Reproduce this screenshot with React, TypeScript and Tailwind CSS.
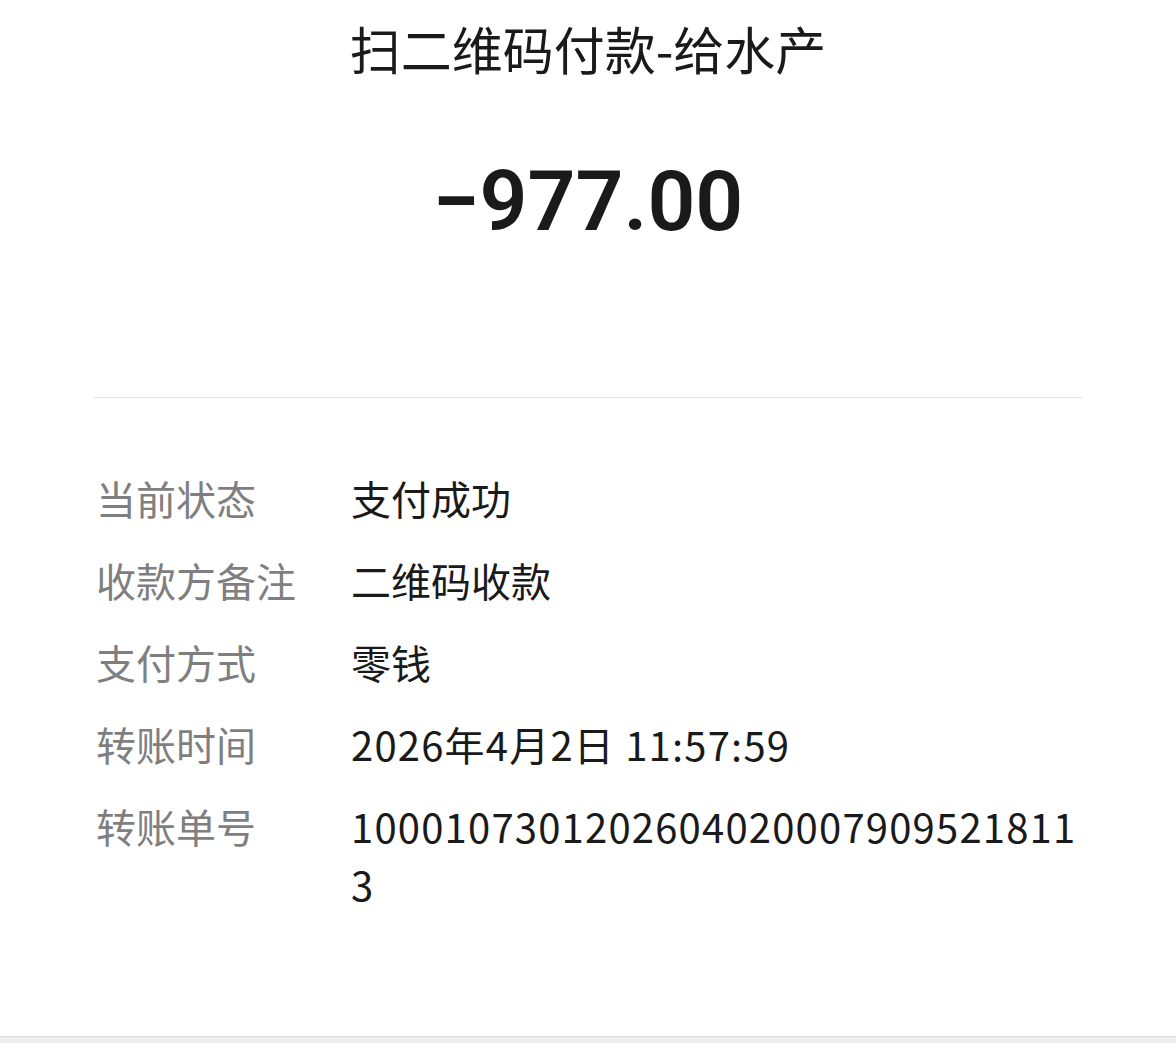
import React from "react";

const rows: { label: string; value: string; digits?: boolean }[] = [
  { label: "当前状态", value: "支付成功" },
  { label: "收款方备注", value: "二维码收款" },
  { label: "支付方式", value: "零钱" },
  { label: "转账时间", value: "2026年4月2日 11:57:59", digits: true },
  { label: "转账单号", value: "10001073012026040200079095218113", digits: true },
];

const App = () => {
  return (
    <div
      className="w-[1176px] h-[1043px] flex flex-col bg-[#ededed] overflow-hidden"
      style={{ fontFamily: '"Noto Sans CJK SC", "Noto Sans", sans-serif' }}
    >
      <div className="bg-white flex-1 flex flex-col border-b border-[#dcdcdc]">
        <h1 className="text-center text-[51px] leading-[60px] pt-[18px] text-[#1a1a1a] font-normal">
          扫二维码付款-给水产
        </h1>
        <div
          className="text-center text-[84px] leading-[100px] mt-[74px] font-semibold text-[#1a1a1a]"
          style={{ fontFamily: "Roboto, sans-serif" }}
        >
          −977.00
        </div>
        <div className="mx-[94px] mt-[145px] h-px bg-[#e5e5e5]" />
        <div className="px-[96px] mt-[71px] flex flex-col gap-[24px]">
          {rows.map((row) => (
            <div key={row.label} className="flex text-[40px] leading-[58px]">
              <div className="w-[255px] shrink-0 text-[#7f7f7f]">{row.label}</div>
              <div
                className={
                  row.digits
                    ? "flex-1 min-w-0 break-all text-[#1a1a1a] tracking-[1.2px]"
                    : "flex-1 min-w-0 break-all text-[#1a1a1a]"
                }
              >
                {row.value}
              </div>
            </div>
          ))}
        </div>
      </div>
      <div className="h-[6px]" />
    </div>
  );
};

export default App;
